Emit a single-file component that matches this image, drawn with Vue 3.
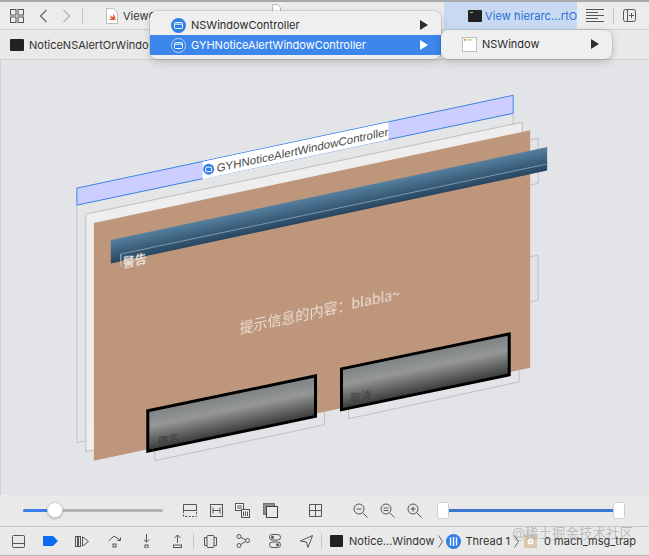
<template>
  <div class="xcode">
    <!-- top toolbar -->
    <div class="toolbar">
      <svg class="ic grid-ic" width="14" height="14" viewBox="0 0 14 14"><g fill="none" stroke="#555"><rect x=".5" y=".5" width="5.5" height="5.5"/><rect x="8" y=".5" width="5.5" height="5.5"/><rect x=".5" y="8" width="5.5" height="5.5"/><rect x="8" y="8" width="5.5" height="5.5"/></g></svg>
      <svg class="ic back-ic" width="9" height="14" viewBox="0 0 9 14"><path d="M7.500 1 1.500 7l6 6" fill="none" stroke="#666" stroke-width="1.200"/></svg>
      <svg class="ic fwd-ic" width="9" height="14" viewBox="0 0 9 14"><path d="M1.500 1l6 6-6 6" fill="none" stroke="#b0b0b0" stroke-width="1.200"/></svg>
      <span class="vline tool-div"></span>
      <svg class="ic doc-ic" width="12" height="16" viewBox="0 0 12 16"><path d="M.5.500h7l4 4v11H.5z" fill="#fff" stroke="#bbb"/><path d="M2.500 11c2 1.500 5 1.500 6.500.5.500.6.700 1 .700 1 .2-1-.1-2-.7-2.800.3-1.700-1-3.300-2.500-4 1 1.400 1 2.700.5 3.500C5.800 8.500 4.500 7.500 3.800 6.800l2 2.700C4.700 9 3.500 8 3 7.500c.6 1.300 1.500 2.300 2.500 3-1 .5-2 .6-3 .5z" fill="#e8563a"/></svg>
      <span class="tab-text">ViewC</span>
      <svg class="ic doc2-ic" width="9" height="14" viewBox="0 0 9 14"><path d="M.5.500h5l3 3v10H.5z" fill="#fff" stroke="#bbb"/></svg>
      <div class="tab-active">
        <svg class="ic" width="14" height="12" viewBox="0 0 14 12"><rect width="14" height="12" rx="1" fill="#222"/><path d="M2 2.500h3" stroke="#8c8"/></svg>
        <span class="tab-active-text">View hierarc...rtO</span>
      </div>
      <div class="tool-right">
        <svg class="ic" width="18" height="14" viewBox="0 0 18 14"><path d="M0 .5h18M0 3.500h12M0 6.500h18M0 9.500h12M0 12.500h18" stroke="#555" fill="none"/></svg>
        <span class="vline right-div"></span>
        <svg class="ic" width="13" height="13" viewBox="0 0 13 13"><rect x=".5" y=".5" width="12" height="12" rx="2" fill="none" stroke="#555"/><path d="M4.500.5v12M8.500 4v5M6 6.500h5" stroke="#555" fill="none"/></svg>
      </div>
    </div>

    <!-- jump bar -->
    <div class="jumpbar">
      <svg class="ic" width="14" height="12" viewBox="0 0 14 12"><rect width="14" height="12" rx="1" fill="#222"/></svg>
      <span class="jump-text">NoticeNSAlertOrWindo</span>
    </div>

    <!-- view debugger canvas -->
    <svg class="canvas" width="649" height="435" viewBox="0 60 649 435">
      <defs>
        <linearGradient id="barBlue" x1="0" y1="0" x2="0" y2="1">
          <stop offset="0" stop-color="#55809f"/>
          <stop offset="1" stop-color="#27455f"/>
        </linearGradient>
        <linearGradient id="btnGray" x1="0" y1="0" x2="0" y2="1">
          <stop offset="0" stop-color="#7f8283"/>
          <stop offset=".4" stop-color="#959797"/>
          <stop offset=".7" stop-color="#666767"/>
          <stop offset="1" stop-color="#363737"/>
        </linearGradient>
      </defs>

      <!-- outlines on the right side -->
      <path d="M530 139.500 538 138v45l-8 2M530 257l8-2v45l-8 2" class="thin"/>

      <!-- window planes -->
      <polygon points="76,205 513,113 513,351 76,443" fill="#e4e5e6" stroke="#c6c7c8"/>
      <polygon points="85,214 522,122 522,360 85,452" fill="#eeeeee" stroke="#bcbdbd"/>
      <polygon points="93,223 530,130 530,368 93,461" fill="#bd967b"/>

      <!-- selected controller plane -->
      <polygon points="76,188 513,95 513,113 76,205" fill="#ccceff" stroke="#3d85e6"/>
      <polygon points="202,161.500 388,122 388,139.500 202,179" fill="#fff"/>
      <circle cx="208" cy="169" r="5.500" fill="#2f7fe8"/>
      <rect x="205" y="167" width="6" height="4.500" rx=".8" fill="none" stroke="#fff"/>
      <text class="skew-label" transform="matrix(1 -0.213 0 1 216 172)">GYHNoticeAlertWindowController</text>

      <!-- title bar -->
      <rect x="0" y="0" width="437" height="23.500" fill="url(#barBlue)" transform="matrix(1 -0.213 0 1 110 240)"/>
      <line x1="120" y1="254" x2="546" y2="164" stroke="#9fb5c4" stroke-width=".7"/>
      <path d="M120 254v13" class="thin"/>
      <text class="skew-title" transform="matrix(1 -0.213 0 1 122 268)">警告</text>
      <text class="skew-msg" transform="matrix(1 -0.213 0 1 239 333)">提示信息的内容：blabla~</text>

      <!-- button outlines -->
      <path d="M154 452v9l170-36v-13M348 400v19l171-37v-12" class="thin"/>

      <!-- buttons -->
      <rect x="0" y="0" width="168" height="40.500" fill="url(#btnGray)" stroke="#000" stroke-width="3" transform="matrix(1 -0.208 0 1 147 411)"/>
      <rect x="0" y="0" width="168" height="41" fill="url(#btnGray)" stroke="#000" stroke-width="3" transform="matrix(1 -0.208 0 1 341 369)"/>
      <text class="skew-btn" transform="matrix(1 -0.213 0 1 157 446)">确定</text>
      <text class="skew-btn" transform="matrix(1 -0.213 0 1 350 403)">取消</text>
    </svg>

    <!-- slider bar -->
    <div class="sliderbar">
      <div class="slider">
        <span class="slider-fill"></span>
        <span class="slider-knob"></span>
      </div>
      <svg class="ic s1" width="14" height="13" viewBox="0 0 14 13"><path d="M.5 6V.5h13V6M0 6.500h14" fill="none" stroke="#555"/><path d="M.5 7v5.500h13V7" fill="none" stroke="#555" stroke-dasharray="2 1.500"/></svg>
      <svg class="ic s2" width="13" height="13" viewBox="0 0 13 13"><rect x=".5" y=".5" width="12" height="12" fill="none" stroke="#555"/><path d="M3 3.500v6M10 3.500v6M3 6.500h7" fill="none" stroke="#555"/></svg>
      <svg class="ic s3" width="15" height="15" viewBox="0 0 15 15"><rect x=".5" y=".5" width="8" height="7" fill="#fff" stroke="#555"/><path d="M2 3h5M2 5h5" stroke="#555"/><rect x="6.500" y="6.500" width="8" height="8" fill="#eee" stroke="#555"/><path d="M8.500 8.500v4.500M10.500 8.500v4.500M12.500 8.500v4.500" stroke="#555"/></svg>
      <svg class="ic s4" width="15" height="15" viewBox="0 0 15 15"><rect x=".5" y=".5" width="11" height="11" fill="#8d8d8d" stroke="#555" stroke-dasharray="2 1"/><rect x="3.500" y="3.500" width="11" height="11" fill="#eaeaea" stroke="#444"/></svg>
      <svg class="ic s5" width="13" height="13" viewBox="0 0 13 13"><path d="M.5.500h12v12H.5zM6.500.5v12M.5 6.500h12" fill="none" stroke="#555"/></svg>
      <svg class="ic z1" width="15" height="15" viewBox="0 0 15 15"><circle cx="6" cy="6" r="5" fill="none" stroke="#555"/><path d="M9.500 9.500l5 5M3.500 6h5" stroke="#555" fill="none"/></svg>
      <svg class="ic z2" width="15" height="15" viewBox="0 0 15 15"><circle cx="6" cy="6" r="5" fill="none" stroke="#555"/><path d="M9.500 9.500l5 5M3.500 5h5M3.500 7.500h5" stroke="#555" fill="none"/></svg>
      <svg class="ic z3" width="15" height="15" viewBox="0 0 15 15"><circle cx="6" cy="6" r="5" fill="none" stroke="#555"/><path d="M9.500 9.500l5 5M3.500 6h5M6 3.500v5" stroke="#555" fill="none"/></svg>
      <div class="range">
        <span class="range-line"></span>
        <span class="range-thumb"></span>
        <span class="range-thumb"></span>
      </div>
    </div>

    <!-- debug bar -->
    <div class="debugbar">
      <svg class="ic d0" width="13" height="13" viewBox="0 0 13 13"><rect x=".5" y=".5" width="12" height="12" rx="1" fill="none" stroke="#555"/><path d="M.5 8.500h12" stroke="#555"/></svg>
      <svg class="ic d1" width="15" height="10" viewBox="0 0 15 10"><path d="M1 0h9l5 5-5 5H1a1 1 0 0 1-1-1V1a1 1 0 0 1 1-1z" fill="#0a6cf0"/></svg>
      <svg class="ic d2" width="14" height="11" viewBox="0 0 14 11"><rect x=".5" y=".5" width="2" height="10" fill="none" stroke="#555"/><rect x="3.500" y=".5" width="2" height="10" fill="none" stroke="#555"/><path d="M7.500.8v9.400L13.500 5.500z" fill="none" stroke="#555"/></svg>
      <svg class="ic d3" width="14" height="13" viewBox="0 0 14 13"><path d="M.5 6 6 1l6 4M12.500 2.500V5.500H9.500" fill="none" stroke="#555"/><rect x="5" y="9" width="3" height="3" fill="none" stroke="#555"/></svg>
      <svg class="ic d4" width="7" height="14" viewBox="0 0 7 14"><path d="M3.500 0v8M.8 5.500l2.700 2.700 2.700-2.700" fill="none" stroke="#555"/><rect x="2" y="11" width="3" height="3" fill="none" stroke="#555"/></svg>
      <svg class="ic d5" width="9" height="14" viewBox="0 0 9 14"><path d="M4.500 9V1M1.500 4l3-3 3 3" fill="none" stroke="#555"/><rect x=".5" y="11" width="8" height="2.500" fill="none" stroke="#555"/></svg>
      <span class="vline d-div1"></span>
      <svg class="ic d6" width="13" height="13" viewBox="0 0 13 13"><rect x="3" y=".5" width="7" height="12" rx="1" fill="none" stroke="#555"/><path d="M3 2.500H.5v8H3M10 2.500h2.500v8H10" fill="none" stroke="#555"/></svg>
      <svg class="ic d7" width="14" height="14" viewBox="0 0 14 14"><circle cx="3" cy="2.500" r="2" fill="none" stroke="#555"/><circle cx="3" cy="11.500" r="2" fill="none" stroke="#555"/><circle cx="11.500" cy="6.500" r="2" fill="none" stroke="#555"/><path d="M4.800 3.500 9.600 5.700M4.800 10.500 9.600 7.400" stroke="#555" fill="none"/></svg>
      <svg class="ic d8" width="12" height="14" viewBox="0 0 12 14"><rect x=".5" y=".5" width="11" height="5.500" rx="2.700" fill="none" stroke="#555"/><circle cx="3.500" cy="3.200" r="1.500" fill="#555"/><rect x=".5" y="8" width="11" height="5.500" rx="2.700" fill="none" stroke="#555"/><circle cx="8.500" cy="10.700" r="1.500" fill="#555"/></svg>
      <svg class="ic d9" width="13" height="13" viewBox="0 0 13 13"><path d="M12.500.5.500 6l6 1 1.500 5.500z" fill="none" stroke="#555"/></svg>
      <span class="vline d-div2"></span>
      <svg class="ic crumb-first" width="13" height="12" viewBox="0 0 13 12"><rect width="13" height="12" rx="1" fill="#222"/></svg>
      <span class="crumb crumb-a">Notice...Window</span>
      <svg class="ic chev" width="5" height="13" viewBox="0 0 5 13"><path d="M.5.500l4 6-4 6" fill="none" stroke="#666"/></svg>
      <svg class="ic thread-ic" width="15" height="15" viewBox="0 0 15 15"><circle cx="7.500" cy="7.500" r="7.500" fill="#2f7de6"/><path d="M4.500 3.500v8M7.500 3v9M10.500 3.500v8" stroke="#fff" stroke-width="1.400"/></svg>
      <span class="crumb crumb-b">Thread 1</span>
      <svg class="ic chev chev2" width="5" height="13" viewBox="0 0 5 13"><path d="M.5.500l4 6-4 6" fill="none" stroke="#666"/></svg>
      <svg class="ic frame-ic" width="13" height="13" viewBox="0 0 13 13"><rect width="13" height="13" fill="#d9c8ae"/><circle cx="6.500" cy="6.500" r="3" fill="#fff"/><circle cx="6.500" cy="6.500" r="1" fill="#c9b795"/></svg>
      <span class="crumb crumb-c">0 mach_msg_trap</span>
    </div>

    <!-- context menus -->
    <div class="menu menu-main">
      <div class="menu-row">
        <svg class="menu-ic" width="15" height="15" viewBox="0 0 15 15"><circle cx="7.500" cy="7.500" r="7.500" fill="#2f7fe8"/><rect x="3.500" y="4.500" width="8" height="6" rx="1" fill="none" stroke="#fff"/><path d="M3.500 6.200h8" stroke="#fff"/></svg>
        <span class="menu-text">NSWindowController</span>
        <span class="arrow"></span>
      </div>
      <div class="menu-row selected">
        <svg class="menu-ic" width="15" height="15" viewBox="0 0 15 15"><circle cx="7.500" cy="7.500" r="7" fill="#2f7fe8" stroke="#bcd6fa"/><rect x="3.500" y="4.500" width="8" height="6" rx="1" fill="none" stroke="#fff"/><path d="M3.500 6.200h8" stroke="#fff"/></svg>
        <span class="menu-text">GYHNoticeAlertWindowController</span>
        <span class="arrow"></span>
      </div>
    </div>
    <div class="menu menu-sub">
      <div class="menu-row">
        <svg class="menu-ic" width="15" height="15" viewBox="0 0 16 16"><rect x=".5" y=".5" width="15" height="15" fill="#fff" stroke="#bbb"/><circle cx="3" cy="3" r="1" fill="#d8503f"/><circle cx="6" cy="3" r="1" fill="#e3b23c"/><circle cx="9" cy="3" r="1" fill="#5cb85c"/></svg>
        <span class="menu-text">NSWindow</span>
        <span class="arrow"></span>
      </div>
    </div>

    <div class="watermark">@稀土掘金技术社区</div>
  </div>
</template>

<script setup>
</script>

<style>
html, body {
  margin: 0;
  background: #e9e9e9;
}
</style>

<style scoped>
.xcode {
  position: relative;
  width: 649px;
  height: 556px;
  overflow: hidden;
  display: flex;
  flex-direction: column;
  font-family: Inter, "Liberation Sans", "Noto Sans CJK SC", sans-serif;
  font-size: 11px;
  color: #333;
  background: #e9e9e9;
}

.ic {
  display: block;
  flex: none;
}

.vline {
  flex: none;
  width: 1px;
  height: 16px;
  background: #c4c4c4;
}

/* top toolbar */
.toolbar {
  flex: none;
  height: 30px;
  box-sizing: border-box;
  border-top: 2px solid #a9a9a9;
  border-bottom: 1px solid #cfcfcf;
  background: #ececec;
  display: flex;
  align-items: center;
  white-space: nowrap;
}

.grid-ic { margin-left: 10px; }
.back-ic { margin-left: 15px; }
.fwd-ic { margin-left: 14px; }
.tool-div { margin-left: 11px; }
.doc-ic { margin-left: 23px; }

.tab-text {
  margin-left: 5px;
  width: 40px;
}

.doc2-ic {
  margin-left: 109px;
  margin-top: -10px;
}

.tab-active {
  margin-left: auto;
  width: 133px;
  height: 28px;
  box-sizing: border-box;
  padding-left: 24px;
  display: flex;
  align-items: center;
  gap: 3px;
  background: #c7daf2;
  overflow: hidden;
}

.tab-active-text {
  color: #2a6fd6;
  letter-spacing: 0.1px;
}

.tool-right {
  flex: none;
  width: 72px;
  box-sizing: border-box;
  padding-left: 9px;
  display: flex;
  align-items: center;
}

.right-div { margin: 0 9px; }

/* jump bar */
.jumpbar {
  flex: none;
  height: 30px;
  box-sizing: border-box;
  padding-left: 10px;
  border-bottom: 1px solid #d2d2d2;
  background: #e9e9e9;
  display: flex;
  align-items: center;
  gap: 5px;
  white-space: nowrap;
  overflow: hidden;
}

/* canvas */
.canvas {
  display: block;
  flex: none;
  background: #e3e4e7;
  border-left: 1px solid #d9cdd0;
  box-sizing: border-box;
  width: 649px;
}

.thin {
  fill: none;
  stroke: #bfc0c2;
  stroke-width: 1;
}

.skew-label {
  font-family: "Liberation Sans", sans-serif;
  font-size: 11.500px;
  fill: #4a4a4a;
}

.skew-title {
  font-family: "Noto Sans CJK SC", sans-serif;
  font-size: 12px;
  font-weight: 700;
  fill: #efe8e2;
  filter: blur(0.4px);
}

.skew-msg {
  font-family: "Noto Sans CJK SC", sans-serif;
  font-size: 14px;
  fill: #ece0d6;
  filter: blur(0.4px);
}

.skew-btn {
  font-family: "Noto Sans CJK SC", sans-serif;
  font-size: 10.500px;
  fill: #3d3d3d;
  filter: blur(0.4px);
}

/* slider bar */
.sliderbar {
  flex: none;
  height: 32px;
  border-bottom: 1px solid #c9c9c9;
  box-sizing: border-box;
  background: #e9e9e9;
  display: flex;
  align-items: center;
}

.slider {
  flex: none;
  position: relative;
  width: 140px;
  height: 3px;
  margin-left: 23px;
  background: #b4b4b4;
  border-radius: 2px;
}

.slider-fill {
  display: block;
  width: 28px;
  height: 3px;
  background: #3a80e8;
  border-radius: 2px;
}

.slider-knob {
  position: absolute;
  left: 24px;
  top: -7px;
  width: 16px;
  height: 16px;
  box-sizing: border-box;
  border: 1px solid #d4d4d4;
  border-radius: 50%;
  background: #fff;
  box-shadow: 0 1px 2px rgba(0, 0, 0, 0.25);
}

.s1 { margin-left: 20px; }
.s2 { margin-left: 13px; }
.s3 { margin-left: 12px; }
.s4 { margin-left: 13px; }
.s5 { margin-left: 31px; }
.z1 { margin-left: 31px; }
.z2 { margin-left: 12px; }
.z3 { margin-left: 12px; }

.range {
  flex: none;
  position: relative;
  width: 188px;
  height: 17px;
  margin-left: 15px;
  display: flex;
  align-items: center;
  justify-content: space-between;
}

.range-line {
  position: absolute;
  left: 6px;
  right: 6px;
  top: 7px;
  height: 3px;
  background: #3a78d0;
}

.range-thumb {
  position: relative;
  width: 12px;
  height: 17px;
  box-sizing: border-box;
  border: 1px solid #cfcfcf;
  border-radius: 3px;
  background: #fff;
}

/* debug bar */
.debugbar {
  flex: none;
  height: 29px;
  box-sizing: border-box;
  border-bottom: 1px solid #b9b9b9;
  background: #e9e9e9;
  display: flex;
  align-items: center;
  white-space: nowrap;
}

.d0 { margin-left: 12px; }
.d1 { margin-left: 18px; }
.d2 { margin-left: 17px; }
.d3 { margin-left: 19px; }
.d4 { margin-left: 21px; }
.d5 { margin-left: 23px; }
.d-div1 { margin-left: 11px; }
.d6 { margin-left: 10px; }
.d7 { margin-left: 19px; }
.d8 { margin-left: 19px; }
.d9 { margin-left: 19px; }
.d-div2 { margin-left: 8px; }

.crumb-first { margin-left: 8px; }
.crumb-a { margin-left: 6px; }
.chev { margin-left: 3px; }
.thread-ic { margin-left: 3px; }
.crumb-b { margin-left: 5px; }
.chev2 { margin-left: 4px; }
.frame-ic { margin-left: 5px; }
.crumb-c { margin-left: 7px; }

/* context menus */
.menu {
  position: absolute;
  box-sizing: border-box;
  padding: 4px 0;
  background: #efefef;
  border-radius: 7px;
  box-shadow: 0 0 0 .5px rgba(0, 0, 0, 0.18), 0 3px 8px rgba(0, 0, 0, 0.18);
  color: #2b2b2b;
}

.menu-main {
  left: 150px;
  top: 11px;
  width: 291px;
  height: 48px;
}

.menu-sub {
  left: 441px;
  top: 30px;
  width: 171px;
  height: 29px;
}

.menu-row {
  height: 20px;
  padding-left: 21px;
  padding-right: 13px;
  display: flex;
  align-items: center;
}

.menu-row.selected {
  background: #3d86ec;
  color: #fff;
}

.menu-ic {
  flex: none;
}

.menu-text {
  margin-left: 5px;
}

.arrow {
  margin-left: auto;
  width: 0;
  height: 0;
  border-left: 8px solid #2e2e2e;
  border-top: 5px solid transparent;
  border-bottom: 5px solid transparent;
}

.selected .arrow {
  border-left-color: #fff;
}

.watermark {
  position: absolute;
  right: 16px;
  top: 522px;
  font-size: 13.500px;
  color: rgba(130, 130, 130, 0.45);
}
</style>
